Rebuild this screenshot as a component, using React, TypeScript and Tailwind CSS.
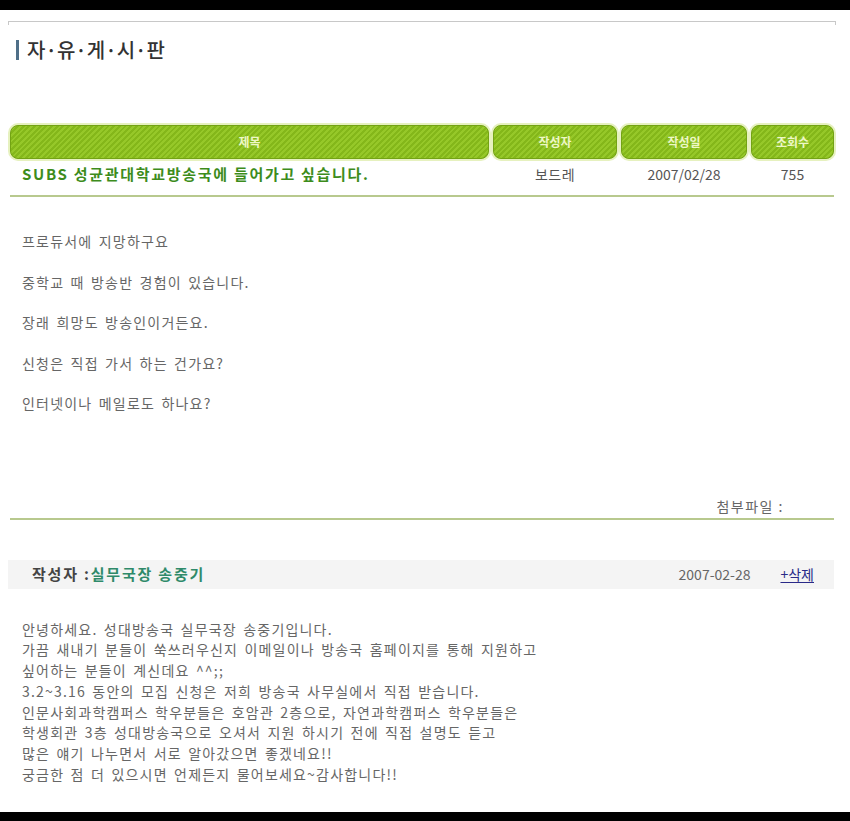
export default function App() {
  const cols = [
    { label: '제목', w: 'w-[479px]' },
    { label: '작성자', w: 'w-[124px]' },
    { label: '작성일', w: 'w-[126px]' },
    { label: '조회수', w: 'w-[83px]' },
  ];

  const question = [
    '프로듀서에 지망하구요',
    '중학교 때 방송반 경험이 있습니다.',
    '장래 희망도 방송인이거든요.',
    '신청은 직접 가서 하는 건가요?',
    '인터넷이나 메일로도 하나요?',
  ];

  const reply = [
    '안녕하세요. 성대방송국 실무국장 송중기입니다.',
    '가끔 새내기 분들이 쑥쓰러우신지 이메일이나 방송국 홈페이지를 통해 지원하고',
    '싶어하는 분들이 계신데요 ^^;;',
    '3.2~3.16 동안의 모집 신청은 저희 방송국 사무실에서 직접 받습니다.',
    '인문사회과학캠퍼스 학우분들은 호암관 2층으로, 자연과학캠퍼스 학우분들은',
    '학생회관 3층 성대방송국으로 오셔서 지원 하시기 전에 직접 설명도 듣고',
    '많은 얘기 나누면서 서로 알아갔으면 좋겠네요!!',
    '궁금한 점 더 있으시면 언제든지 물어보세요~감사합니다!!',
  ];

  return (
    <div className="h-[821px] w-[850px] bg-white flex flex-col overflow-hidden font-['Noto_Sans_CJK_KR','Noto_Sans',sans-serif]">
      <div className="h-[10px] bg-black shrink-0" />

      <div className="flex-1 flex flex-col">
        {/* 상단 테두리 */}
        <div className="mt-[11px] ml-[8px] mr-[14px] h-[4px] border-t border-x border-[#c8c8c8]" />

        {/* 타이틀 */}
        <div className="flex items-center mt-[12px] ml-[16px] gap-[8px]">
          <div className="w-[3px] h-[20px] bg-[#4f6f88]" />
          <h1 className="text-[20px] leading-[26px] font-medium text-[#333]">자·유·게·시·판</h1>
        </div>

        {/* 목록 헤더 */}
        <div className="mt-[62px] mx-[10px] flex gap-[4px]">
          {cols.map((c) => (
            <div
              key={c.label}
              className={`${c.w} h-[34px] rounded-[8px] border border-[#73a314] shadow-[0_0_0_2px_#e6f1bf] bg-[#8abd1c] bg-[image:repeating-linear-gradient(135deg,#84b71a_0px,#84b71a_2px,#96c829_2px,#96c829_4px)] flex items-center justify-center text-[12px] font-semibold text-[#eef7c6]`}
            >
              {c.label}
            </div>
          ))}
        </div>

        {/* 글 정보 */}
        <div className="ml-[10px] mr-[16px] h-[38px] pb-[5px] flex items-center gap-[4px] border-b-2 border-[#b8c98e] text-[13px] text-[#555]">
          <div className="w-[479px] pl-[12px] text-[15px] font-bold text-[#3d8c1c] tracking-[1.7px]">
            SUBS 성균관대학교방송국에 들어가고 싶습니다.
          </div>
          <div className="w-[124px] text-center text-[14px] tracking-[0.5px]">보드레</div>
          <div className="w-[126px] text-center text-[14px]">2007/02/28</div>
          <div className="w-[83px] text-center text-[14px]">755</div>
        </div>

        {/* 본문 */}
        <div className="ml-[10px] mr-[16px] pt-[24px] pl-[12px] text-[14px] leading-[40.5px] text-[#666] tracking-[1.2px] [word-spacing:2px]">
          {question.map((l) => (
            <p key={l}>{l}</p>
          ))}
        </div>

        <div className="ml-[10px] mr-[16px] mt-[72px] pb-[2px] pr-[50px] text-right text-[14px] leading-[20px] text-[#666] tracking-[1.5px] border-b-2 border-[#b8c98e]">
          첨부파일 :
        </div>

        {/* 댓글 */}
        <div className="mt-[40px] ml-[8px] mr-[16px] h-[29px] bg-[#f4f4f4] flex items-center pl-[24px] pr-[20px]">
          <span className="text-[15px] font-bold text-[#444] tracking-[1.8px]">작성자 :</span>
          <span className="text-[15px] font-bold text-[#2f8a6a] tracking-[1.8px]">실무국장 송중기</span>
          <span className="ml-auto text-[14px] text-[#666]">2007-02-28</span>
          <a href="#" className="ml-[30px] text-[14px] text-[#2a2a88] underline underline-offset-2">+삭제</a>
        </div>

        <div className="pt-[30px] pl-[22px] text-[14px] leading-[20.8px] text-[#666] tracking-[1.2px] [word-spacing:2px]">
          {reply.map((l) => (
            <p key={l}>{l}</p>
          ))}
        </div>
      </div>

      <div className="h-[9px] bg-black shrink-0" />
    </div>
  );
}
